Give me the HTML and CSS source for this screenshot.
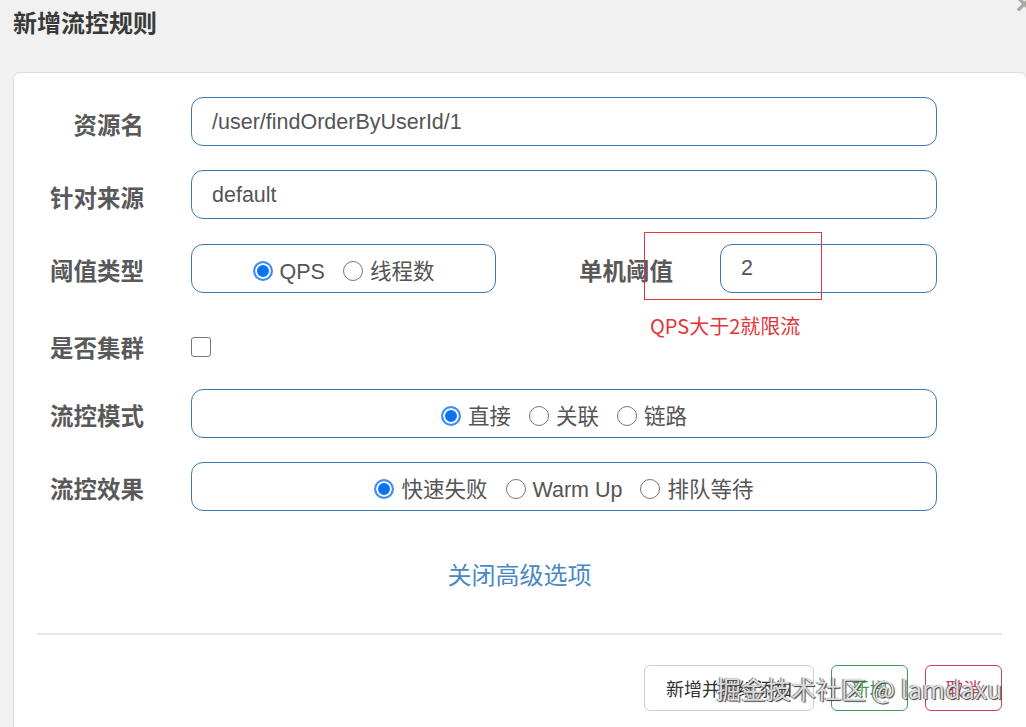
FILE: index.html
```html
<!DOCTYPE html>
<html lang="zh-CN">
<head>
<meta charset="utf-8">
<title>新增流控规则</title>
<link rel="stylesheet" href="styles.css">
</head>
<body>
<div class="page">
  <header class="modal-header">
    <h1 class="title">新增流控规则</h1>
    <span class="close">×</span>
  </header>
  <div class="card">
    <form class="form">
      <div class="row">
        <label class="lbl">资源名</label>
        <input class="field" type="text" value="/user/findOrderByUserId/1">
      </div>
      <div class="row">
        <label class="lbl">针对来源</label>
        <input class="field" type="text" value="default">
      </div>
      <div class="row">
        <label class="lbl">阈值类型</label>
        <div class="box box-type">
          <label class="opt"><input type="radio" name="grade" checked><span>QPS</span></label>
          <label class="opt"><input type="radio" name="grade"><span>线程数</span></label>
        </div>
        <label class="lbl lbl2">单机阈值</label>
        <div class="count-wrap">
          <input class="field field-count" type="text" value="2">
          <span class="mark"></span>
          <span class="help">QPS大于2就限流</span>
        </div>
      </div>
      <div class="row row-check">
        <label class="lbl">是否集群</label>
        <input class="check" type="checkbox">
      </div>
      <div class="row">
        <label class="lbl">流控模式</label>
        <div class="box">
          <label class="opt"><input type="radio" name="mode" checked><span>直接</span></label>
          <label class="opt"><input type="radio" name="mode"><span>关联</span></label>
          <label class="opt"><input type="radio" name="mode"><span>链路</span></label>
        </div>
      </div>
      <div class="row">
        <label class="lbl">流控效果</label>
        <div class="box">
          <label class="opt"><input type="radio" name="effect" checked><span>快速失败</span></label>
          <label class="opt"><input type="radio" name="effect"><span>Warm Up</span></label>
          <label class="opt"><input type="radio" name="effect"><span>排队等待</span></label>
        </div>
      </div>
    </form>
    <div class="adv"><a class="adv-link" href="#">关闭高级选项</a></div>
    <hr class="sep">
    <div class="footer">
      <button class="btn btn-default" type="button">新增并继续添加</button>
      <button class="btn btn-success" type="button">新增</button>
      <button class="btn btn-danger" type="button">取消</button>
    </div>
  </div>
  <div class="watermark">掘金技术社区 @ lamdaxu</div>
</div>
</body>
</html>
```

FILE: styles.css
```css
* { box-sizing: border-box; }

html, body {
  margin: 0;
  padding: 0;
  width: 1026px;
  height: 727px;
  overflow: hidden;
  background: #f1f1f1;
  font-family: "Liberation Sans", "Noto Sans CJK SC", sans-serif;
  color: #555;
}

.page {
  position: relative;
  width: 1026px;
  height: 727px;
  overflow: hidden;
}

.modal-header {
  display: flex;
  justify-content: space-between;
  align-items: flex-start;
  height: 72px;
  padding: 6px 0 0 13px;
}

.title {
  margin: 0;
  font-family: "Noto Sans CJK SC", sans-serif;
  font-size: 24px;
  line-height: 32px;
  font-weight: 700;
  color: #3a3a3a;
}

.close {
  margin-top: -17px;
  margin-right: -7px;
  font-size: 30px;
  font-weight: 700;
  line-height: 30px;
  color: #a8a8a8;
}

.card {
  margin-left: 13px;
  width: 1014px;
  height: 700px;
  background: #fff;
  border: 1px solid #dcdcdc;
  border-radius: 7px 7px 0 0;
  padding: 24px 24px 0 23px;
}

.form {
  display: flex;
  flex-direction: column;
  gap: 24.4px;
}

.row {
  display: flex;
  align-items: center;
  height: 49px;
}

.lbl {
  width: 107px;
  flex: none;
  text-align: right;
  margin-right: 47px;
  padding-top: 4px;
  font-family: "Noto Sans CJK SC", sans-serif;
  font-size: 23.5px;
  font-weight: 700;
  color: #595959;
  line-height: 30px;
  white-space: nowrap;
}

.field {
  width: 746px;
  height: 49px;
  border: 1px solid #3f79b3;
  border-radius: 12px;
  padding: 1px 20px 0 20px;
  font-family: "Liberation Sans", "Noto Sans CJK SC", sans-serif;
  font-size: 21.5px;
  color: #555;
  background: #fff;
  outline: none;
}

.box {
  width: 746px;
  height: 49px;
  border: 1px solid #3f79b3;
  border-radius: 12px;
  display: flex;
  align-items: center;
  justify-content: center;
  gap: 18px;
  padding: 6px 0 0 0;
}

.box-type {
  width: 305px;
  flex: none;
  padding-left: 0;
  padding-right: 0;
}

.opt {
  display: flex;
  align-items: center;
  gap: 7px;
  font-size: 21.5px;
  line-height: 28px;
  color: #555;
  white-space: nowrap;
}

.opt span { display: block; padding-top: 1px; }

.opt input {
  appearance: none;
  -webkit-appearance: none;
  margin: 0;
  width: 20px;
  height: 20px;
  border-radius: 50%;
  border: 1px solid #767676;
  background: #fff;
  flex: none;
}

.opt input:checked {
  border: 2px solid #3d8ef7;
  background: #0a73f0;
  box-shadow: inset 0 0 0 2px #fff;
}

.lbl2 {
  width: 177px;
  margin-right: 47px;
}

.count-wrap {
  position: relative;
  width: 217px;
  height: 49px;
}

.field-count {
  width: 217px;
}

.mark {
  position: absolute;
  left: -76px;
  top: -12px;
  width: 178px;
  height: 68px;
  border: 1px solid #e0383f;
  pointer-events: none;
}

.help {
  position: absolute;
  left: -70px;
  top: 100%;
  margin-top: 20px;
  white-space: nowrap;
  font-family: "Noto Sans CJK SC", sans-serif;
  font-size: 20px;
  line-height: 26px;
  color: #e2343b;
}

.row-check {
  margin-top: 5px;
  margin-bottom: -7px;
}

.row-check .lbl {
  padding-top: 0;
}

.check {
  appearance: none;
  -webkit-appearance: none;
  margin: 0;
  width: 20px;
  height: 20px;
  border: 1px solid #767676;
  border-radius: 3px;
  background: #fff;
}

.adv {
  margin-top: 45px;
  text-align: center;
  line-height: 36px;
}

.adv-link {
  font-family: "Noto Sans CJK SC", sans-serif;
  font-size: 24px;
  color: #4a88c5;
  text-decoration: none;
}

.sep {
  margin: 36px 0 0 0;
  border: 0;
  height: 2px;
  background: #e6e6e6;
}

.footer {
  margin-top: 30px;
  display: flex;
  justify-content: flex-end;
  gap: 17px;
}

.btn {
  height: 46px;
  border-radius: 6px;
  background: #fff;
  font-family: "Noto Sans CJK SC", sans-serif;
  font-size: 18px;
  padding: 0 18px;
  line-height: 44px;
}

.btn-default {
  width: 170px;
  border: 1px solid #cfcfcf;
  color: #333;
}

.btn-success {
  width: 77px;
  border: 1px solid #3d9d55;
  color: #3d9d55;
  padding: 0;
}

.btn-danger {
  width: 77px;
  border: 1px solid #c8405c;
  color: #c8405c;
  padding: 0;
}

.watermark {
  position: absolute;
  left: 716px;
  top: 671px;
  font-family: "Noto Sans CJK SC", sans-serif;
  font-size: 25px;
  line-height: 34px;
  white-space: nowrap;
  color: rgba(245, 245, 245, 0.85);
  text-shadow: 1px 1px 1px #3c3c3c, -1px 0 1px #6a6a6a;
  pointer-events: none;
}
```
